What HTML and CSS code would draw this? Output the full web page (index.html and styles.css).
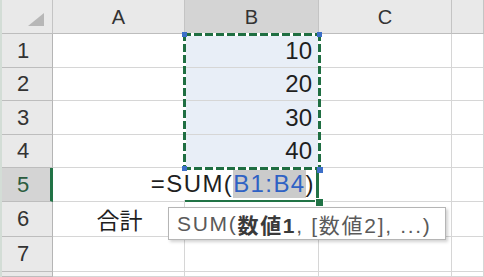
FILE: index.html
```html
<!DOCTYPE html>
<html>
<head>
    <title>Sheet1</title>
    <link rel="stylesheet" href="styles.css">
</head>
<body>
    <div class="sheet">
        <div class="grid cells">
            <!-- header row -->
            <div class="corner">
                <svg width="17" height="14" viewBox="0 0 17 14"><polygon points="16,0 16,13 0,13" fill="#b7b7b7"/></svg>
            </div>
            <div class="colhead">A</div>
            <div class="colhead sel">B</div>
            <div class="colhead">C</div>
            <div class="colhead"></div>

            <!-- row 1 -->
            <div class="rowhead">1</div>
            <div class="cell"></div>
            <div class="cell ref num">10</div>
            <div class="cell"></div>
            <div class="cell"></div>

            <!-- row 2 -->
            <div class="rowhead">2</div>
            <div class="cell"></div>
            <div class="cell ref num">20</div>
            <div class="cell"></div>
            <div class="cell"></div>

            <!-- row 3 -->
            <div class="rowhead">3</div>
            <div class="cell"></div>
            <div class="cell ref num">30</div>
            <div class="cell"></div>
            <div class="cell"></div>

            <!-- row 4 -->
            <div class="rowhead">4</div>
            <div class="cell"></div>
            <div class="cell ref num">40</div>
            <div class="cell"></div>
            <div class="cell"></div>

            <!-- row 5 (being edited) -->
            <div class="rowhead active">5</div>
            <div class="cell"></div>
            <div class="cell editing"></div>
            <div class="cell"></div>
            <div class="cell"></div>

            <!-- row 6 -->
            <div class="rowhead">6</div>
            <div class="cell label">合計</div>
            <div class="cell"></div>
            <div class="cell"></div>
            <div class="cell"></div>

            <!-- row 7 -->
            <div class="rowhead">7</div>
            <div class="cell"></div>
            <div class="cell"></div>
            <div class="cell"></div>
            <div class="cell"></div>

            <!-- row 8 (cut off) -->
            <div class="rowhead"></div>
            <div class="cell"></div>
            <div class="cell"></div>
            <div class="cell"></div>
            <div class="cell"></div>
        </div>

        <!-- things drawn on top of the cells, on the same tracks -->
        <div class="grid layer">
            <!-- copied range B1:B4 -->
            <div class="ants">
                <span class="grip tl"></span>
                <span class="grip tr"></span>
                <span class="grip bl"></span>
                <span class="grip br"></span>
            </div>

            <!-- in-cell editor for B5 -->
            <div class="editor">=SUM(<span class="arg">B1:B4</span>)</div>
            <span class="fill-handle"></span>

            <!-- function tip -->
            <div class="tip">SUM(<b>数値1</b>, [数値2], ...)</div>
        </div>
    </div>
</body>
</html>
```

FILE: styles.css
```css
body {
    margin: 0;
    overflow: hidden;
    background: #ffffff;
    font-family: "Liberation Sans", "Noto Sans CJK JP", sans-serif;
    color: #1f1f1f;
}

/* Worksheet: cells and overlay share one area */
.sheet {
    display: grid;
    width: 484px;
    height: 277px;
    overflow: hidden;
    box-sizing: border-box;
    border-left: 2px solid #d3ddd6;
}

.grid {
    grid-area: 1 / 1;
    display: grid;
    grid-template-columns: 51px 132px 134px 133px 1fr;
    grid-template-rows: 34px 34px 33px 34px 33px 34px 35px 35px 1fr;
    min-height: 0;
}

.layer {
    pointer-events: none;
}

.corner,
.colhead,
.rowhead {
    background: #e9e9e9;
    box-sizing: border-box;
    border-right: 1px solid #c4c4c4;
    border-bottom: 1px solid #bdbdbd;
    color: #333;
}

.corner {
    display: flex;
    align-items: flex-end;
    justify-content: flex-end;
    padding: 0 7px 6px 0;
}

.colhead {
    display: flex;
    align-items: center;
    justify-content: center;
    font-size: 20px;
    padding-top: 2px;
}

.colhead.sel {
    background: #d4d4d4;
}

.rowhead {
    display: flex;
    align-items: center;
    justify-content: center;
    font-size: 22px;
    border-right-color: #b5b5b5;
    padding-right: 8px;
}

.rowhead.active {
    background: #d4d4d4;
    border-right: 3px solid #217346;
    padding-right: 6px;
    color: #2b5c3f;
}

.cell {
    box-sizing: border-box;
    border-right: 1px solid #d6d6d6;
    border-bottom: 1px solid #d6d6d6;
    display: flex;
    align-items: center;
    font-size: 24px;
}

.cell.ref {
    background: #e8eef7;
}

.cell.num {
    justify-content: flex-end;
    padding-right: 6px;
}

.cell.label {
    justify-content: center;
    font-size: 23px;
    padding-left: 2px;
}

.cell.editing {
    border-right: 3px solid #217346;
    border-bottom: 3px solid #217346;
}

/* marching ants round the referenced range */
.ants {
    grid-column: 3;
    grid-row: 2 / 6;
    margin: -1px -2px -2px -2px;
    position: relative;
    background:
        repeating-linear-gradient(90deg, #1f6e42 0 8px, #ffffff 8px 11px) top / 100% 3px no-repeat,
        repeating-linear-gradient(90deg, #1f6e42 0 8px, #ffffff 8px 11px) bottom / 100% 3px no-repeat,
        repeating-linear-gradient(180deg, #1f6e42 0 8px, #ffffff 8px 11px) left / 3px 100% no-repeat,
        repeating-linear-gradient(180deg, #1f6e42 0 8px, #ffffff 8px 11px) right / 3px 100% no-repeat;
}

.grip {
    position: absolute;
    width: 5px;
    height: 5px;
    background: #3c6fc8;
}

.grip.tl { left: -1px; top: -1px; }
.grip.tr { right: -1px; top: -1px; }
.grip.bl { left: -1px; bottom: -1px; }
.grip.br { right: -2px; bottom: -3px; width: 6px; height: 6px; }

/* text being typed into B5, spilling left over A5 */
.editor {
    grid-column: 2 / 4;
    grid-row: 6;
    justify-self: end;
    align-self: center;
    margin: 0 4px 2px 0;
    padding: 2px 0 2px 4px;
    background: #ffffff;
    font-size: 24px;
    letter-spacing: 1.4px;
    white-space: nowrap;
    color: #1f1f1f;
}

.editor .arg {
    background: #cbcbcb;
    color: #2f62c4;
    padding: 1px 0;
}

.fill-handle {
    grid-column: 3;
    grid-row: 6;
    justify-self: end;
    align-self: end;
    width: 7px;
    height: 7px;
    background: #217346;
    border: 1px solid #ffffff;
    margin: 0 -5px -5px 0;
}

/* function argument tooltip */
.tip {
    grid-column: 2 / 5;
    grid-row: 7;
    align-self: start;
    justify-self: start;
    margin: 5px 0 0 115px;
    width: 278px;
    height: 33px;
    box-sizing: border-box;
    padding: 0 8px;
    display: flex;
    align-items: center;
    background: #ffffff;
    border: 1px solid #b5b5b5;
    box-shadow: 2px 2px 3px rgba(0, 0, 0, 0.18);
    font-size: 21px;
    letter-spacing: 1.7px;
    color: #5a5a5a;
    white-space: pre;
}

.tip b {
    color: #3a3a3a;
}
```
